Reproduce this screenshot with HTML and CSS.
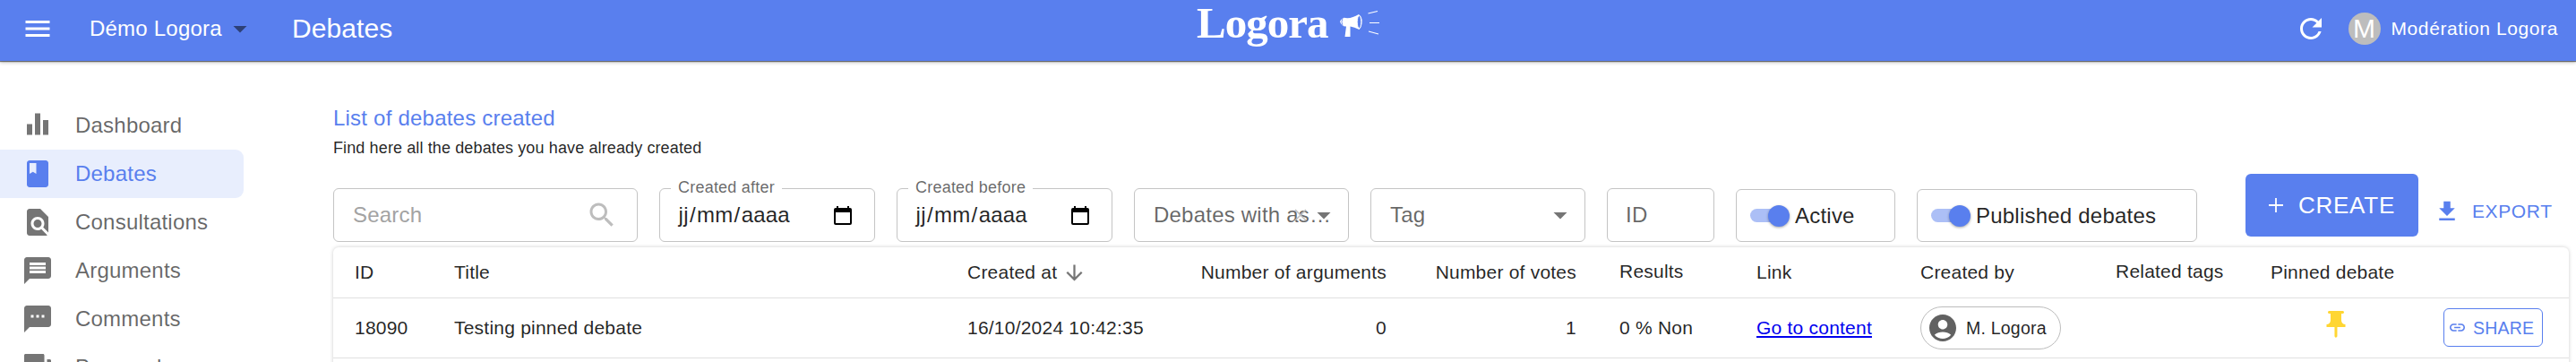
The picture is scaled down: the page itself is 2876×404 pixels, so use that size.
FILE: index.html
```html
<!DOCTYPE html>
<html lang="en">
<head>
<meta charset="utf-8">
<title>Debates</title>
<link rel="stylesheet" href="styles.css">
</head>
<body>
<header class="topbar">
  <svg class="icon menu" viewBox="0 0 24 24"><path d="M3 18h18v-2H3v2zm0-5h18v-2H3v2zm0-7v2h18V6H3z"/></svg>
  <div class="app">Démo Logora</div>
  <svg class="icon app-caret" viewBox="0 0 24 24"><path d="M7 10l5 5 5-5z"/></svg>
  <h1 class="page-title">Debates</h1>
  <div class="logo">
    <span class="logo-text">Logora</span>
    <svg class="logo-horn" viewBox="0 0 46 32">
      <path fill="#fff" d="M1 10Q4 5 7 6Q14 7 22 2Q26 5 25.500 10Q25.500 16 22.500 19Q17 16 12.500 15.500L12.500 27H6.500L8 15.500Q3 16 1 10Z"/>
      <ellipse cx="22.500" cy="10.500" rx="2.300" ry="7" fill="#597fee" stroke="#fff" stroke-width="1"/>
      <path d="M4 6Q2 10 4 15" fill="none" stroke="#597fee" stroke-width=".8"/>
      <path d="M32.500 1l10.500-2.500M34 11.500h11M33 21l11 3" stroke="#fff" stroke-width="1.200" fill="none"/>
    </svg>
  </div>
  <div class="account">
    <svg class="icon" viewBox="0 0 24 24"><path d="M17.650 6.350C16.200 4.900 14.210 4 12 4c-4.420 0-7.990 3.580-7.990 8s3.570 8 7.990 8c3.730 0 6.840-2.550 7.730-6h-2.080c-.82 2.330-3.040 4-5.650 4-3.310 0-6-2.690-6-6s2.690-6 6-6c1.660 0 3.140.69 4.220 1.780L13 11h7V4l-2.350 2.350z"/></svg>
    <div class="avatar">M</div>
    <div class="account-name">Modération Logora</div>
  </div>
</header>
<div class="layout">
  <nav class="sidebar">
    <a class="nav-item"><svg class="icon" viewBox="0 0 24 24"><path d="M4 11h4v8H4zm12-3h4v11h-4zM10 3h4v16h-4z"/></svg>Dashboard</a>
    <a class="nav-item active"><svg class="icon" viewBox="0 0 24 24"><path d="M18 2H6c-1.100 0-2 .9-2 2v16c0 1.100.9 2 2 2h12c1.100 0 2-.9 2-2V4c0-1.100-.9-2-2-2zM6 4h5v8l-2.500-1.500L6 12V4z"/></svg>Debates</a>
    <a class="nav-item"><svg class="icon" viewBox="0 0 24 24"><path d="M20 19.590V8l-6-6H6c-1.100 0-1.990.9-1.990 2L4 20c0 1.100.89 2 1.990 2H18c.45 0 .85-.15 1.190-.4l-4.430-4.430c-.8.52-1.740.83-2.760.83-2.760 0-5-2.240-5-5s2.240-5 5-5 5 2.240 5 5c0 1.020-.31 1.960-.83 2.750L20 19.590zM9 13c0 1.660 1.340 3 3 3s3-1.340 3-3-1.340-3-3-3-3 1.340-3 3z"/></svg>Consultations</a>
    <a class="nav-item"><svg class="icon flip" viewBox="0 0 24 24"><path d="M21.990 4c0-1.100-.89-2-1.990-2H4c-1.100 0-2 .9-2 2v12c0 1.100.9 2 2 2h14l4 4-.01-18zM18 14H6v-2h12v2zm0-3H6V9h12v2zm0-3H6V6h12v2z"/></svg>Arguments</a>
    <a class="nav-item"><svg class="icon" viewBox="0 0 24 24"><path d="M20 2H4c-1.100 0-1.990.9-1.990 2L2 22l4-4h14c1.100 0 2-.9 2-2V4c0-1.100-.9-2-2-2zM9 11H7V9h2v2zm4 0h-2V9h2v2zm4 0h-2V9h2v2z"/></svg>Comments</a>
    <a class="nav-item"><svg class="icon" viewBox="0 0 24 24"><path d="M21 6h-2v9H6v2c0 .55.45 1 1 1h11l4 4V7c0-.55-.45-1-1-1zm-4 6V3c0-.55-.45-1-1-1H3c-.55 0-1 .45-1 1v14l4-4h10c.55 0 1-.45 1-1z"/></svg>Proposals</a>
  </nav>
  <main class="content">
    <h2 class="heading">List of debates created</h2>
    <p class="subheading">Find here all the debates you have already created</p>
    <div class="toolbar">
      <div class="field search"><span class="placeholder">Search</span>
        <svg class="icon faint" viewBox="0 0 24 24"><path d="M15.500 14h-.79l-.28-.27C15.410 12.590 16 11.110 16 9.500 16 5.910 13.090 3 9.500 3S3 5.910 3 9.500 5.910 16 9.500 16c1.610 0 3.090-.59 4.230-1.570l.27.28v.79l5 4.990L20.490 19l-4.990-5zm-6 0C7.010 14 5 11.990 5 9.500S7.010 5 9.500 5 14 7.010 14 9.500 11.990 14 9.500 14z"/></svg></div>
      <div class="field date"><span class="label">Created after</span>
        <span class="date-value"><span>jj</span><span>/</span><span>mm</span><span>/</span><span>aaaa</span></span>
        <svg class="calendar" viewBox="0 0 20 21"><path d="M2 2H3V0H5V2H15V0H17V2H18Q20 2 20 4V19Q20 21 18 21H2Q0 21 0 19V4Q0 2 2 2ZM2 7V19H18V7Z"/></svg></div>
      <div class="field date"><span class="label">Created before</span>
        <span class="date-value"><span>jj</span><span>/</span><span>mm</span><span>/</span><span>aaaa</span></span>
        <svg class="calendar" viewBox="0 0 20 21"><path d="M2 2H3V0H5V2H15V0H17V2H18Q20 2 20 4V19Q20 21 18 21H2Q0 21 0 19V4Q0 2 2 2ZM2 7V19H18V7Z"/></svg></div>
      <div class="field select"><span class="select-text">Debates with as…</span>
        <svg class="clear" viewBox="0 0 14 14"><path d="M1 1l12 12M13 1L1 13"/></svg>
        <svg class="icon caret" viewBox="0 0 24 24"><path d="M7 10l5 5 5-5z"/></svg></div>
      <div class="field select"><span class="select-text">Tag</span>
        <svg class="icon caret" viewBox="0 0 24 24"><path d="M7 10l5 5 5-5z"/></svg></div>
      <div class="field id-field"><span class="select-text">ID</span></div>
      <div class="field toggle toggle-active"><span class="switch"><span class="thumb"></span></span>Active</div>
      <div class="field toggle toggle-published"><span class="switch"><span class="thumb"></span></span>Published debates</div>
      <div class="create"><svg class="plus" viewBox="0 0 16 16"><path d="M8 0v16M0 8h16"/></svg>CREATE</div>
      <div class="export"><svg class="icon export-icon" viewBox="0 0 24 24"><path d="M19 9h-4V3H9v6H5l7 7 7-7zM5 18v2h14v-2H5z"/></svg>EXPORT</div>
    </div>
    <div class="table">
      <div class="row head">
        <div>ID</div><div>Title</div>
        <div>Created at<svg class="sort" viewBox="0 0 24 24"><path d="M20 12l-1.410-1.410L13 16.170V4h-2v12.170l-5.580-5.590L4 12l8 8 8-8z"/></svg></div>
        <div class="num">Number of arguments</div><div class="num">Number of votes</div>
        <div class="raised">Results</div><div>Link</div><div>Created by</div><div class="raised">Related tags</div><div>Pinned debate</div><div></div>
      </div>
      <div class="row">
        <div>18090</div><div>Testing pinned debate</div><div>16/10/2024 10:42:35</div>
        <div class="num">0</div><div class="num">1</div><div>0 % Non</div>
        <div><a class="link" href="#">Go to content</a></div>
        <div><span class="chip"><svg class="icon" viewBox="0 0 24 24"><path d="M12 2C6.480 2 2 6.480 2 12s4.480 10 10 10 10-4.480 10-10S17.520 2 12 2zm0 4c1.930 0 3.500 1.570 3.500 3.500S13.930 13 12 13s-3.500-1.570-3.500-3.500S10.070 6 12 6zm0 14c-2.030 0-4.430-.82-6.140-2.880C7.550 15.800 9.680 15 12 15s4.450.8 6.140 2.120C16.430 19.180 14.030 20 12 20z"/></svg>M. Logora</span></div>
        <div></div>
        <div class="pinned"><svg class="icon" viewBox="0 0 24 24"><path d="M16 9V4h1c.55 0 1-.45 1-1s-.45-1-1-1H7c-.55 0-1 .45-1 1s.45 1 1 1h1v5c0 1.660-1.340 3-3 3v2h5.970v7l1 1 1-1v-7H19v-2c-1.660 0-3-1.340-3-3z"/></svg></div>
        <div class="share-cell"><span class="share"><svg class="share-icon" viewBox="2 7 20 10"><path d="M3.900 12c0-1.710 1.390-3.100 3.100-3.100h4V7H7c-2.760 0-5 2.240-5 5s2.240 5 5 5h4v-1.900H7c-1.710 0-3.100-1.390-3.100-3.100zM8 13h8v-2H8v2zm9-6h-4v1.900h4c1.710 0 3.100 1.390 3.100 3.100s-1.390 3.100-3.100 3.100h-4V17h4c2.760 0 5-2.240 5-5s-2.240-5-5-5z"/></svg>SHARE</span></div>
      </div>
    </div>
  </main>
</div>
</body>
</html>
```

FILE: styles.css
```css
* { box-sizing: border-box; }
html { height: 404px; overflow: hidden; }
body {
  margin: 0;
  height: 404px;
  overflow: hidden;
  background: #fff;
  color: rgba(0, 0, 0, .87);
  font: 24px/36px "Liberation Sans", Arial, sans-serif;
  letter-spacing: .22px;
  white-space: nowrap;
}
h1, h2, p { margin: 0; font-weight: 400; }
svg { display: block; flex: none; fill: currentColor; overflow: visible; }
.icon { width: 36px; height: 36px; }

.topbar {
  position: relative;
  display: flex;
  align-items: center;
  height: 68px;
  padding: 0 20px 4px 24px;
  background: #597fee;
  color: #fff;
  box-shadow: 0 1px 1px rgba(0, 0, 0, .5), 0 2px 4px rgba(0, 0, 0, .22);
}
.app { margin-left: 40px; width: 150px; }
.app-caret { color: #2d4077; }
.page-title { margin-left: 40px; font-size: 30px; line-height: 40px; letter-spacing: .1px; }
.logo {
  position: absolute;
  left: 1336px;
  top: 0;
  display: flex;
  align-items: flex-start;
}
.logo-text {
  width: 159px;
  margin-top: -2px;
  font: 700 49px/56px "Liberation Serif", serif;
  letter-spacing: -1px;
}
.logo-horn { width: 46px; height: 32px; margin-top: 14px; }
.account { display: flex; align-items: center; margin-left: auto; }
.avatar {
  width: 36px;
  height: 36px;
  margin: 0 12px 0 24px;
  border-radius: 50%;
  background: #bdbdbd;
  font-size: 30px;
  line-height: 36px;
  text-align: center;
}
.account-name { font-size: 21px; letter-spacing: .6px; }

.layout { display: flex; height: 336px; overflow: hidden; clip-path: inset(0); }
.topbar { z-index: 1; }
.sidebar { flex: none; width: 372px; height: 336px; padding-top: 45px; overflow: hidden; }
.nav-item {
  display: flex;
  align-items: center;
  gap: 24px;
  width: 272px;
  height: 54px;
  padding-left: 24px;
  color: rgba(0, 0, 0, .6);
}
.nav-item .icon { color: #757575; }
.nav-item.active { border-radius: 0 9px 9px 0; background: #e8eefd; }
.nav-item.active, .nav-item.active .icon { color: #597fee; }
.flip { transform: scaleX(-1); }

.content { flex: none; width: 2496px; padding-top: 46px; }
.heading { font-size: 24px; line-height: 36px; color: #597fee; }
.subheading { font-size: 18px; line-height: 30px; letter-spacing: .12px; }

.toolbar { display: flex; align-items: flex-end; gap: 24px; height: 90px; }
.field {
  position: relative;
  display: flex;
  align-items: center;
  height: 60px;
  border: 1px solid #c4c4c4;
  border-radius: 6px;
}
.search { width: 340px; padding: 0 21px; justify-content: space-between; }
.placeholder { color: #a3a3a3; }
.faint { color: #bdbdbd; }
.date { width: 241px; padding: 0 25px 0 20px; justify-content: space-between; }
.label {
  position: absolute;
  left: 12px;
  top: -14px;
  padding: 0 8px;
  background: #fff;
  color: rgba(0, 0, 0, .6);
  font-size: 18px;
  line-height: 24px;
}
.date-value { display: flex; }
.date-value span { padding: 0 .6px; }
.calendar { width: 20px; height: 21px; color: #000; }
.select { width: 240px; padding-left: 21px; }
.select-text { color: rgba(0, 0, 0, .6); }
.caret { position: absolute; right: 9px; top: 11px; color: #757575; }
.clear {
  position: absolute;
  right: 46px;
  top: 22px;
  width: 14px;
  height: 14px;
  stroke: #bdbdbd;
  stroke-width: 1.500;
}
.id-field { width: 120px; padding-left: 20px; }
.toggle { height: 59px; padding-left: 15px; gap: 14px; }
.toggle-active { width: 178px; }
.toggle-published { width: 313px; }
.switch { position: relative; width: 36px; height: 15px; border-radius: 8px; background: #acbff6; }
.thumb {
  position: absolute;
  left: 20px;
  top: -4px;
  width: 24px;
  height: 24px;
  border-radius: 50%;
  background: #597fee;
  box-shadow: 0 1px 3px rgba(0, 0, 0, .35);
}
.create {
  display: flex;
  align-items: center;
  align-self: flex-end;
  width: 193px;
  height: 70px;
  margin: 0 0 6px 30px;
  padding-left: 26px;
  gap: 17px;
  border-radius: 6px;
  background: #597fee;
  color: #fff;
  font-size: 26px;
  letter-spacing: .74px;
}
.plus { width: 16px; height: 16px; stroke: #fff; stroke-width: 1.800; }
.export {
  display: flex;
  align-items: center;
  height: 36px;
  margin: 0 0 16px -7px;
  gap: 13px;
  color: #597fee;
  font-size: 21px;
  letter-spacing: .6px;
}
.export-icon { width: 30px; height: 30px; }

.table {
  height: 200px;
  margin-top: 6px;
  border-radius: 6px;
  box-shadow: 0 0 4px rgba(0, 0, 0, .2);
  font-size: 21px;
}
.row {
  display: grid;
  grid-template-columns: 111px 573px 261px 255px 212px 153px 183px 218px 173px 189px 168px;
  height: 67px;
  border-bottom: 1px solid #e0e0e0;
}
.row > div { display: flex; align-items: center; padding: 0 24px; }
.row.head { height: 57px; }
.row > .num { justify-content: flex-end; }
.row > .raised { padding-bottom: 2px; }
.sort { width: 27px; height: 27px; margin-left: 6px; color: #757575; }
.link { color: #00e; text-decoration: underline; text-underline-offset: 2px; }
.chip {
  display: flex;
  align-items: center;
  height: 48px;
  width: 157px;
  padding-left: 6px;
  gap: 8px;
  border: 1px solid #bdbdbd;
  border-radius: 24px;
  font-size: 19.500px;
}
.chip .icon { color: #616161; }
.row > .pinned { justify-content: center; padding: 0 0 8px 5px; color: #ffd633; }
.row > .share-cell { padding: 0 0 1px 28px; }
.share {
  display: flex;
  align-items: center;
  width: 111px;
  height: 43px;
  padding-left: 6px;
  gap: 9px;
  border: 1px solid #597fee;
  border-radius: 6px;
  color: #597fee;
  font-size: 19.500px;
}
.share-icon { width: 17px; height: 9px; }
```
